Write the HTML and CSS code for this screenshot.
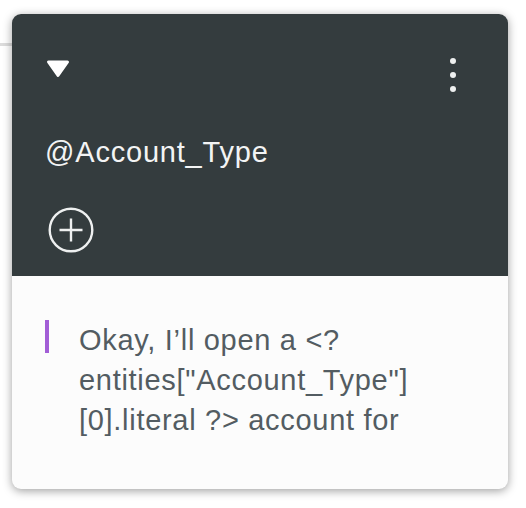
FILE: index.html
```html
<!DOCTYPE html>
<html>
<head>
<meta charset="utf-8">
<link rel="stylesheet" href="styles.css">
</head>
<body>
<div class="connector"></div>
<div class="card">
  <div class="card-header">
    <div class="top-row">
      <svg class="caret" width="24" height="18" viewBox="0 0 24 18">
        <path d="M2.5 2 L21.5 2 L12 15.5 Z" fill="#ffffff" stroke="#ffffff" stroke-width="3" stroke-linejoin="round"/>
      </svg>
      <svg class="kebab" width="8" height="36" viewBox="0 0 8 36">
        <circle cx="4" cy="4" r="3" fill="#eef0f0"/>
        <circle cx="4" cy="18" r="3" fill="#eef0f0"/>
        <circle cx="4" cy="32" r="3" fill="#eef0f0"/>
      </svg>
    </div>
    <div class="title">@Account_Type</div>
    <svg class="add" width="48" height="48" viewBox="0 0 48 48">
      <circle cx="24" cy="24" r="21.3" fill="none" stroke="#eef0f0" stroke-width="2.4"/>
      <path d="M24 12.5 V35.5 M12.5 24 H35.5" stroke="#eef0f0" stroke-width="2.4" fill="none"/>
    </svg>
  </div>
  <div class="card-body">
    <p class="response">Okay, I’ll open a &lt;?<br>entities["Account_Type"]<br>[0].literal ?&gt; account for</p>
  </div>
</div>
</body>
</html>
```
FILE: styles.css
```css
html, body {
  margin: 0;
  padding: 0;
  background: #ffffff;
}
body {
  width: 526px;
  height: 508px;
  position: relative;
  overflow: hidden;
  font-family: "Liberation Sans", Arial, sans-serif;
}
.connector {
  position: absolute;
  left: 0;
  top: 43px;
  width: 12px;
  height: 3px;
  background: #dcdcdc;
}
.card {
  position: relative;
  margin: 14px 0 0 12px;
  width: 496px;
  height: 475px;
  border-radius: 9px;
  overflow: hidden;
  background: #fcfcfc;
  box-shadow: 0 2px 10px rgba(0, 0, 0, 0.38);
  display: flex;
  flex-direction: column;
}
.card-header {
  height: 262px;
  background: #343c3e;
  box-sizing: border-box;
  padding: 46px 51px 0 34px;
  display: flex;
  flex-direction: column;
  align-items: flex-start;
}
.top-row {
  align-self: stretch;
  display: flex;
  justify-content: space-between;
  align-items: flex-start;
  height: 18px;
}
.caret {
  display: block;
}
.kebab {
  display: block;
  margin-top: -3px;
}
.title {
  margin-top: 58px;
  margin-left: -1px;
  font-size: 29px;
  line-height: 32px;
  letter-spacing: 0.8px;
  color: #f3f4f4;
}
.add {
  display: block;
  margin-top: 38px;
  margin-left: 0.5px;
}
.card-body {
  flex: 1;
  padding: 44px 20px 0 67px;
}
.response {
  position: relative;
  margin: 0;
  font-size: 29px;
  line-height: 40px;
  letter-spacing: 0.7px;
  color: #535c62;
}
.response::before {
  content: "";
  position: absolute;
  left: -34px;
  top: 0;
  width: 4px;
  height: 33px;
  background: #a25ed6;
}
```
